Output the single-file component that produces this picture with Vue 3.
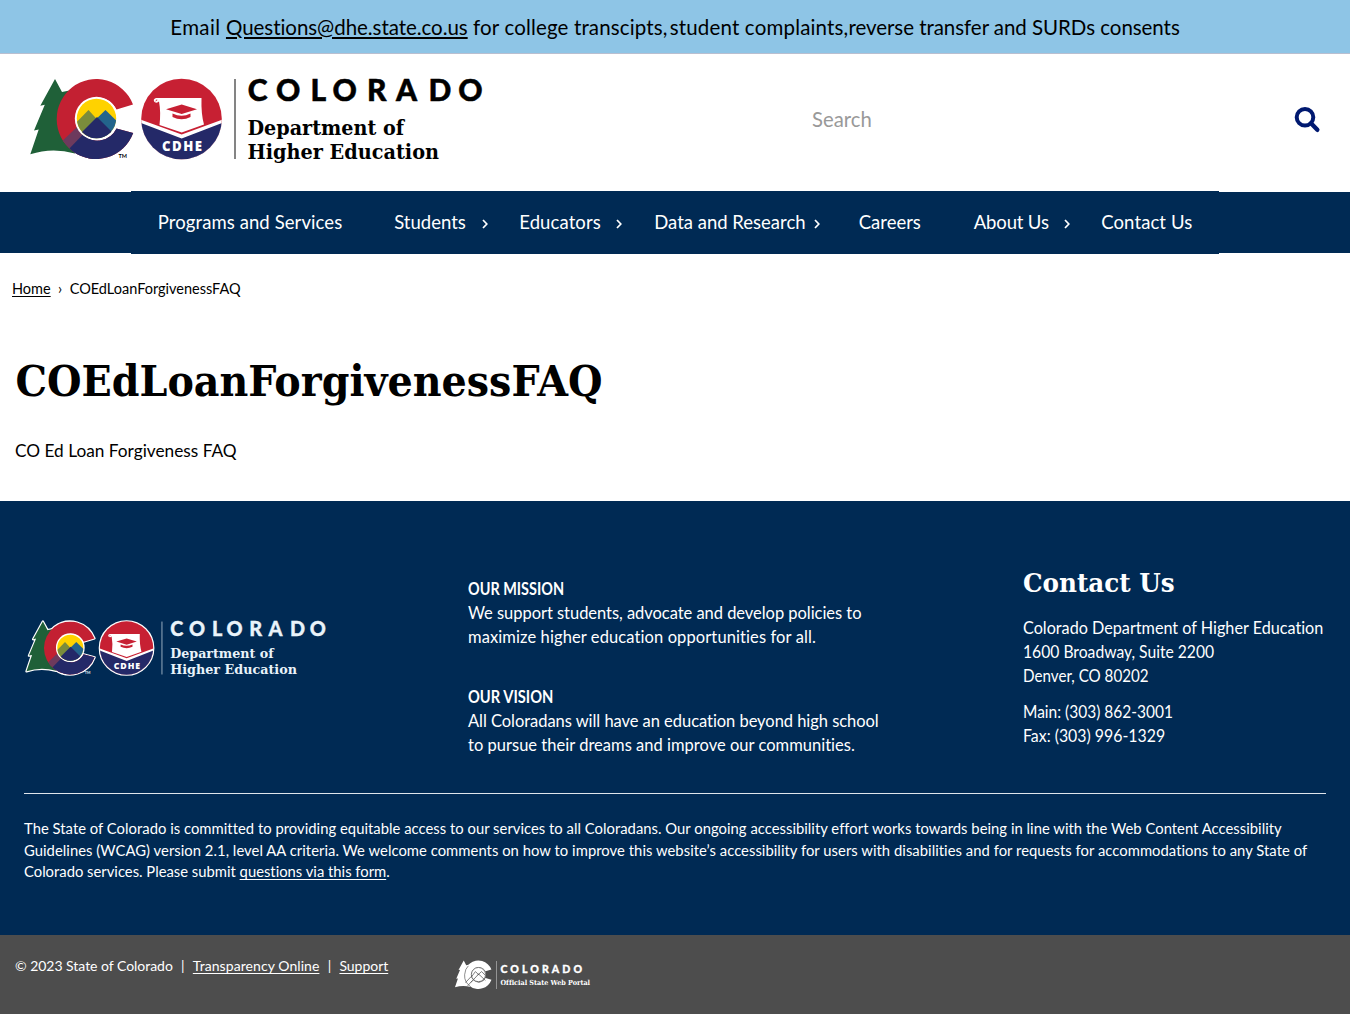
<script setup>
const nav = [
  { label: 'Programs and Services', menu: false },
  { label: 'Students', menu: true },
  { label: 'Educators', menu: true },
  { label: 'Data and Research', menu: true },
  { label: 'Careers', menu: false },
  { label: 'About Us', menu: true },
  { label: 'Contact Us', menu: false },
]
</script>

<template>
  <div class="page">
    <svg class="defs" width="0" height="0" aria-hidden="true">
      <defs>
        <path id="tree" d="M55 79 L40.3 105.8 L44.8 104.8 L34 130.5 L38.7 129.5 L30.3 154.3 Q52 147 75 153.500 L72 90 L62 92 Z" />
        <path id="letter-c" d="M133 104.500 A39.500 40 0 1 0 133.200 133 L116.500 128.500 A21.500 21.500 0 1 1 116.500 109.500 Z" />
        <circle id="sun-ring" cx="96.500" cy="118.500" r="21.700" />
        <circle id="seal-disc" cx="181.500" cy="119" r="40.300" />
        <clipPath id="clip-c"><use href="#letter-c" /></clipPath>
        <clipPath id="clip-sun"><circle cx="96.500" cy="118.500" r="19.700" /></clipPath>
        <clipPath id="clip-seal"><use href="#seal-disc" /></clipPath>
        <g id="marks">
          <use href="#tree" fill="#1f6038" />
          <g clip-path="url(#clip-c)">
            <rect x="55" y="76" width="82" height="86" fill="#c32032" />
            <path d="M54 149 L97 108 V162 H54 Z" fill="#6d3a5d" />
            <path d="M66 152 L97 120 L140 120 V162 H64 Z" fill="#242968" />
          </g>
          <use href="#sun-ring" fill="#fff" />
          <g clip-path="url(#clip-sun)">
            <rect x="75" y="97" width="43" height="43" fill="#ffd200" />
            <path d="M71 128 L88.500 110 L104 127 L92 140 H71 Z" fill="#7a8c3c" />
            <path d="M90 125 L105.500 110 L122 126 V140 H90 Z" fill="#23648c" />
            <path d="M73 141 L97 117 L120 140 V142 H73 Z" fill="#242968" />
          </g>
          <text x="118.500" y="157.800" font-size="5.500" font-weight="700" textLength="8.500" font-family="Lato, sans-serif" fill="currentColor">TM</text>
          <g clip-path="url(#clip-seal)">
            <rect x="140" y="78" width="83" height="83" fill="#c72033" />
            <path d="M140 119.500 L181.700 134.500 L223 119.500 V161 H140 Z" fill="#fff" />
            <path d="M140 122.500 L181.700 138.500 L223 122.500 V161 H140 Z" fill="#242968" />
          </g>
          <path d="M156 98 H201.500 Q201 114 204 124.500 L181.700 132.500 L159.500 125 Q161 112 159 101.500 Q157 103.500 154.500 102 Q152.500 99 156 98 Z" fill="#fff" />
          <path d="M155.500 101 Q157.500 100.500 156.800 99.500" fill="none" stroke="#c72033" stroke-width=".8" />
          <path d="M166 109.200 L181.700 104.500 L197 109.200 L181.700 114 Z M172.500 113.500 Q181.700 118 190.500 113.500 V117 Q181.700 121.500 172.500 117 Z" fill="#c72033" />
          <text x="162" y="151" font-size="13.200" font-weight="800" textLength="40" font-family="Open Sans, sans-serif" fill="#fff">CDHE</text>
        </g>
        <g id="wordmark">
          <rect x="234.200" y="79" width="1.600" height="80" fill="currentColor" opacity=".6" />
          <text x="247.700 276 310.500 332.600 367 396 428.500 458.300" y="101.400" font-size="30" font-weight="900" font-family="Lato, sans-serif" fill="currentColor" stroke="currentColor" stroke-width=".5">COLORADO</text>
          <text x="247.500" y="134.800" font-size="20" font-weight="700" textLength="156.500" lengthAdjust="spacingAndGlyphs" font-family="DejaVu Serif, serif" fill="currentColor">Department of</text>
          <text x="247.500" y="158.500" font-size="20" font-weight="700" textLength="191.500" lengthAdjust="spacingAndGlyphs" font-family="DejaVu Serif, serif" fill="currentColor">Higher Education</text>
        </g>
      </defs>
    </svg>

    <div class="banner"><span><span class="lead">Email </span><a>Questions@dhe.state.co.us</a><span class="mid"> for college transcipts,</span><span class="wide">student complaints,</span>reverse transfer and SURDs consents</span></div>

    <header class="header">
      <svg class="logo" viewBox="28 77 458 90">
        <use href="#marks" /><use href="#wordmark" />
      </svg>
      <div class="search">
        <span>Search</span>
        <svg width="26" height="26" viewBox="0 0 26 26" fill="none" stroke="#001970">
          <circle cx="11" cy="11.300" r="8.300" stroke-width="4" />
          <path d="M17 17.300 L23.300 23.800" stroke-width="4.400" stroke-linecap="round" />
        </svg>
      </div>
    </header>

    <div class="navbar">
      <nav>
        <a v-for="item in nav" :key="item.label">
          <span>{{ item.label }}</span>
          <svg v-if="item.menu" width="6" height="10" viewBox="0 0 6 10" fill="none" stroke="#fff" stroke-width="1.700"><path d="M1 1 L4.800 5 L1 9" /></svg>
        </a>
      </nav>
    </div>

    <main>
      <div class="crumbs"><a>Home</a><i>›</i><span>COEdLoanForgivenessFAQ</span></div>
      <h1>
        <svg width="620" height="70" viewBox="0 0 620 70"><text x="0.500" y="42" textLength="587" lengthAdjust="spacingAndGlyphs">COEdLoanForgivenessFAQ</text></svg>
      </h1>
      <p class="body"><span>CO Ed Loan Forgiveness FAQ</span></p>
    </main>

    <footer class="footer">
      <div class="columns">
        <svg class="footer-logo" viewBox="28 77 458 90">
          <g fill="#fff" stroke="#fff" stroke-width="3.600" stroke-linejoin="round">
            <use href="#tree" /><use href="#letter-c" /><use href="#seal-disc" />
          </g>
          <use href="#marks" /><use href="#wordmark" />
        </svg>
        <div class="mission">
          <b class="m0">OUR MISSION</b>
          <span class="m1">We support students, advocate and develop policies to</span>
          <span class="m2">maximize higher education opportunities for all.</span>
          <b class="m3">OUR VISION</b>
          <span class="m4">All Coloradans will have an education beyond high school</span>
          <span class="m5">to pursue their dreams and improve our communities.</span>
        </div>
        <div class="contact">
          <h2><svg width="170" height="36" viewBox="0 0 170 36"><text x="0" y="26" textLength="151.500" lengthAdjust="spacingAndGlyphs">Contact Us</text></svg></h2>
          <span class="c1">Colorado Department of Higher Education</span>
          <span class="c2">1600 Broadway, Suite 2200</span>
          <span class="c3">Denver, CO 80202</span>
          <span class="c4">Main: (303) 862-3001</span>
          <span class="c5">Fax: (303) 996-1329</span>
        </div>
      </div>
      <div class="statement">
        <span class="s1">The State of Colorado is committed to providing equitable access to our services to all Coloradans. Our ongoing accessibility effort works towards being in line with the Web Content Accessibility</span>
        <span class="s2">Guidelines (WCAG) version 2.1, level AA criteria. We welcome comments on how to improve this website’s accessibility for users with disabilities and for requests for accommodations to any State of</span>
        <span class="s3">Colorado services. Please submit <a>questions via this form</a>.</span>
      </div>
    </footer>

    <div class="legal">
      <div class="links"><span>© 2023 State of Colorado</span><i>|</i><a class="l1">Transparency Online</a><i>|</i><a class="l2">Support</a></div>
      <svg class="portal" width="150" height="34" viewBox="0 0 150 34" fill="#fff">
        <g transform="translate(-9.800 -25.500) scale(.355)">
          <use href="#tree" />
          <use href="#letter-c" />
          <path d="M75 153 Q56 140 57.500 119 Q59 102 68 94" fill="none" stroke="#4d4d4d" stroke-width="1.800" />
          <circle cx="96.500" cy="118.500" r="21" />
          <path d="M75 141 L97 117 L116 135 M76 126 L88 110 L98 120 M94 120 L105.500 110 L115 120 M60 141 L76 124 M66 150 L80 135" fill="none" stroke="#4d4d4d" stroke-width="2" />
          <circle cx="96.500" cy="118.500" r="20" fill="none" stroke="#4d4d4d" stroke-width="2.200" />
        </g>
        <rect x="42" y="3" width="1" height="28" opacity=".4" />
        <text x="46.500" y="14.700" font-size="10.600" font-weight="900" textLength="81.500" font-family="Lato, sans-serif" stroke="#fff" stroke-width=".3">COLORADO</text>
        <text x="46.500" y="26.500" font-size="7" font-weight="700" textLength="89.500" lengthAdjust="spacingAndGlyphs" font-family="DejaVu Serif, serif">Official State Web Portal</text>
      </svg>
    </div>
  </div>
</template>

<style>
body { margin: 0; background: #fff; }
</style>

<style scoped>
.page { width: 1350px; height: 1014px; overflow: hidden; display: flex; flex-direction: column; font-family: "Lato", sans-serif; font-variant-ligatures: none; color: #000; background: #fff; white-space: nowrap; }
.defs { position: absolute; }
svg { overflow: visible; }
a { text-decoration: underline; color: inherit; text-underline-offset: 2px; }
.banner { height: 53px; flex: none; border-bottom: 1px solid #b9bfd0; background: #8ec5e6; display: flex; justify-content: center; align-items: center; font-size: 20.5px; letter-spacing: -.05px; }
.banner a { text-decoration-thickness: 2px; }
.lead { letter-spacing: .35px; }
.mid { letter-spacing: .15px; }
.wide { letter-spacing: .17px; margin-left: 2px; }
.header { height: 137px; flex: none; display: flex; align-items: flex-start; justify-content: space-between; padding: 23px 30px 0 28px; box-sizing: border-box; }
.logo { width: 458px; height: 90px; color: #000; }
.search { width: 508px; margin-top: 29px; display: flex; align-items: center; justify-content: space-between; font-size: 20.3px; color: #999; }
.navbar { height: 62px; flex: none; background: linear-gradient(#fff 0 1px, #002a54 1px 62px); display: flex; justify-content: center; }
nav { width: 1061px; height: 62.500px; flex: none; background: #002a54; display: flex; padding-left: 26.500px; }
nav a { text-decoration: none; color: #fff; font-size: 18.500px; display: flex; align-items: center; flex: none; box-sizing: border-box; height: 62px; }
nav a svg { margin-left: auto; margin-top: 3px; }
nav a:nth-child(1) { width: 236.500px; letter-spacing: .09px; }
nav a:nth-child(2) { width: 125px; padding-right: 31px; }
nav a:nth-child(3) { width: 135px; padding-right: 32px; letter-spacing: .1px; }
nav a:nth-child(4) { width: 204.500px; padding-right: 39px; }
nav a:nth-child(5) { width: 115px; }
nav a:nth-child(6) { width: 127.500px; padding-right: 31px; letter-spacing: -.15px; }
nav a:nth-child(7) { letter-spacing: .1px; }
main { height: 248px; flex: none; }
.crumbs { margin: 26px 0 0 12px; height: 20px; line-height: 20px; font-size: 14.500px; display: flex; }
.crumbs i { font-style: normal; width: 19px; text-align: center; }
h1 { margin: 55px 0 0 15px; height: 60px; }
h1 text { font: 700 43px "DejaVu Serif", serif; }
.body { margin: 24px 0 0 15px; font-size: 17.250px; line-height: 26px; }
.footer { height: 434px; flex: none; box-sizing: border-box; padding: 0 24px; background: #002a54; color: #fff; }
.columns { height: 293px; box-sizing: border-box; border-bottom: 1px solid #dfe5ec; display: flex; font-size: 16.500px; line-height: 24px; }
.columns span, .columns b, .statement span { display: block; transform-origin: left center; }
.footer-logo { width: 303px; height: 60px; flex: none; margin: 118.500px 1.500px 0 .5px; color: #e9f3fa; }
.mission { margin: 76px 0 0 139px; width: 555px; flex: none; }
.m0 { transform: scaleX(.875); }
.m1 { letter-spacing: -.04px; }
.m2 { letter-spacing: .1px; }
.m3 { margin-top: 36px; transform: scaleX(.89); }
.m4 { letter-spacing: -.045px; }
.m5 { letter-spacing: .02px; }
h2 { margin: 65px 0 14px; height: 36px; }
h2 text { font: 700 26px "DejaVu Serif", serif; fill: #fff; }
.c1 { transform: scaleX(.981); }
.c2 { transform: scaleX(.95); }
.c3 { transform: scaleX(.92); }
.c4 { margin-top: 12px; transform: scaleX(.939); }
.c5 { transform: scaleX(.962); }
.statement { padding-top: 24px; font-size: 14.800px; line-height: 21.600px; }
.s1 { letter-spacing: .025px; }
.s2 { letter-spacing: .04px; }
.legal { height: 79px; flex: none; background: #4d4d4d; color: #fff; display: flex; align-items: flex-start; }
.links { width: 439px; margin: 21px 0 0 15px; font-size: 14px; line-height: 20px; letter-spacing: -.03px; display: flex; }
.links i { font-style: normal; width: 20px; text-align: center; }
.l1 { letter-spacing: .07px; }
.portal { margin-top: 23px; }
</style>
